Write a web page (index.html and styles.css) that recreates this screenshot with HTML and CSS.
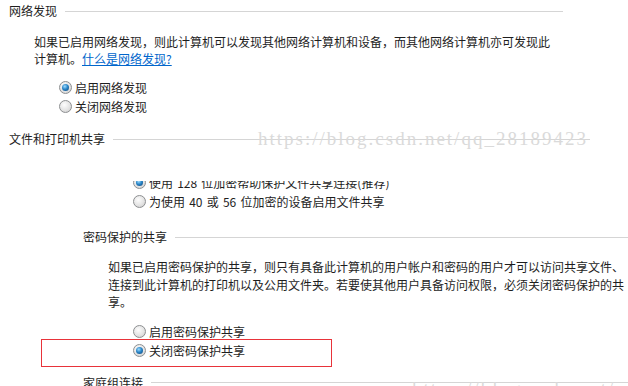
FILE: index.html
```html
<!DOCTYPE html>
<html lang="zh-CN">
<head>
	<meta charset="utf-8">
	<title>高级共享设置</title>
	<link rel="stylesheet" href="styles.css">
</head>
<body>
	<div class="page">

		<div class="group-title top">
			<span>网络发现</span>
			<div class="rule"></div>
		</div>
		<p class="desc first">如果已启用网络发现，则此计算机可以发现其他网络计算机和设备，而其他网络计算机亦可发现此<br>计算机。<a href="#">什么是网络发现?</a></p>
		<ul class="options near">
			<li><span class="radio on"></span>启用网络发现</li>
			<li><span class="radio"></span>关闭网络发现</li>
		</ul>

		<div class="group-title share">
			<span>文件和打印机共享</span>
			<div class="rule"></div>
		</div>

		<div class="cut">
			<ul class="options deep">
				<li><span class="radio on"></span>使用 128 位加密帮助保护文件共享连接(推荐)</li>
				<li><span class="radio"></span>为使用 40 或 56 位加密的设备启用文件共享</li>
			</ul>
		</div>

		<div class="group-title sub password">
			<span>密码保护的共享</span>
			<div class="rule"></div>
		</div>
		<p class="desc second">如果已启用密码保护的共享，则只有具备此计算机的用户帐户和密码的用户才可以访问共享文件、<br>连接到此计算机的打印机以及公用文件夹。若要使其他用户具备访问权限，必须关闭密码保护的共<br>享。</p>
		<ul class="options deep last">
			<li><span class="radio"></span>启用密码保护共享</li>
			<li><span class="radio on"></span>关闭密码保护共享</li>
		</ul>

		<div class="group-title sub home">
			<span>家庭组连接</span>
			<div class="rule"></div>
		</div>

		<div class="mark one">https://blog.csdn.net/qq_28189423</div>
		<div class="mark two">https://blog.csdn.net/qq_28189423</div>
		<div class="highlight"></div>
	</div>
</body>
</html>
```

FILE: styles.css
```css
html,
body {
	margin: 0;
	padding: 0;
	background: #fff;
	overflow: hidden;
}

.page {
	position: relative;
	width: 628px;
	height: 386px;
	overflow: hidden;
	font: 12px "Microsoft YaHei", "Noto Sans CJK SC", sans-serif;
	color: #1e1e1e;
}

.group-title {
	display: flex;
	align-items: center;
	height: 18px;
	line-height: 18px;
	padding-left: 9px;
}
.group-title>span { white-space: nowrap; }
.group-title .rule {
	flex: 1;
	height: 1px;
	margin-left: 8px;
	background: #d5d5d5;
}

.group-title.top { margin-top: 2px; margin-right: 65px; }
.group-title.share { margin-top: 14px; margin-right: 38px; }
.group-title.sub { padding-left: 83px; }
.group-title.password { margin-top: 17px; }
.group-title.home { margin-top: 14px; }

.desc {
	margin: 0;
	line-height: 17px;
	white-space: nowrap;
}
.desc.first { margin-top: 13px; padding-left: 34px; }
.desc.second { margin-top: 12px; padding-left: 108px; line-height: 17.5px; }
.desc a { color: #0066cc; text-decoration: underline; }

.options { margin: 0; padding: 0; list-style: none; }
.options>li {
	display: flex;
	align-items: center;
	height: 19px;
	white-space: pre;
	word-spacing: 1.5px;
}
.options.near { margin-top: 11px; padding-left: 59px; }
.options.deep { padding-left: 133px; }
.options.last { margin-top: 11px; }

.cut {
	margin-top: 33px;
	overflow: hidden;
}
.cut .options { margin-top: -8px; }

.radio {
	position: relative;
	box-sizing: border-box;
	width: 13px;
	height: 13px;
	margin-right: 3px;
	border-radius: 50%;
	border: 1px solid #8d8f91;
	background: radial-gradient(circle at 40% 35%, #fdfdfd 0%, #e4e4e4 55%, #c9c9c9 100%);
	flex: none;
}
.radio.on::after {
	content: "";
	position: absolute;
	left: 2px;
	top: 2px;
	width: 7px;
	height: 7px;
	border-radius: 50%;
	background: radial-gradient(circle at 40% 35%, #9fdcff 0%, #2a86c8 45%, #0b3f72 100%);
}

.mark {
	position: absolute;
	font: 19px/19px "Liberation Serif", serif;
	letter-spacing: 2px;
	color: #dadada;
	white-space: nowrap;
}
.mark.one { left: 258px; top: 129px; }
.mark.two { left: 412px; top: 379px; }

.highlight {
	position: absolute;
	left: 41px;
	top: 339px;
	width: 291px;
	height: 28px;
	box-sizing: border-box;
	border: 1px solid #e8333a;
}
```
